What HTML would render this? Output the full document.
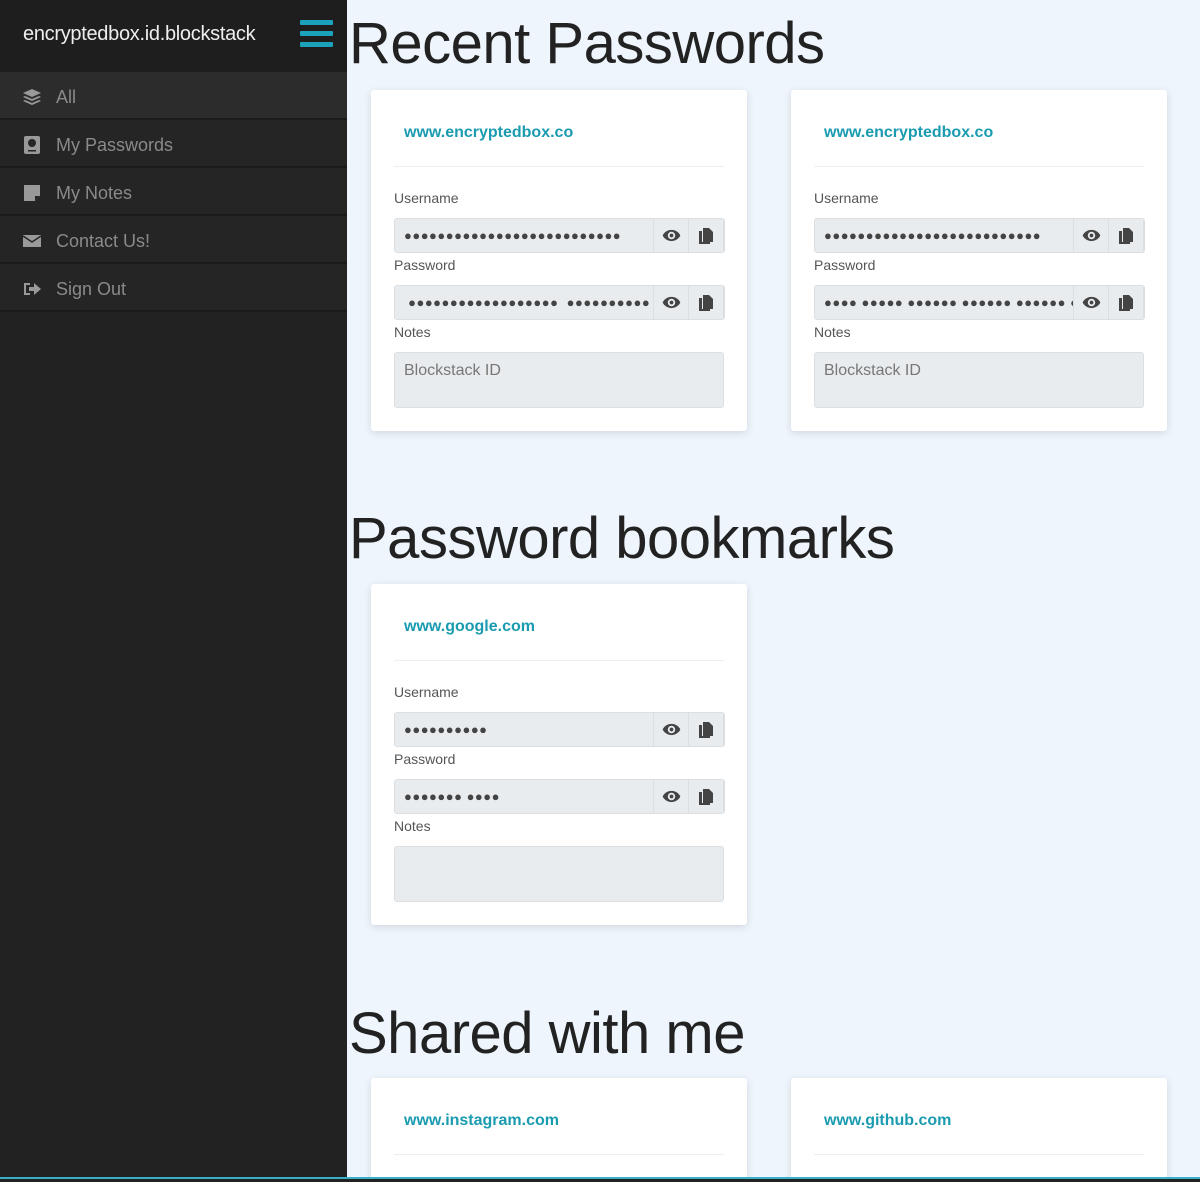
<!DOCTYPE html>
<html><head><meta charset="utf-8"><style>
*{box-sizing:border-box;margin:0;padding:0}
html{width:1200px;height:1182px;overflow:hidden}
body{width:1200px;height:1182px;overflow:hidden;background:#eef5fc;font-family:"Liberation Sans",sans-serif;position:relative}
.side{position:absolute;left:0;top:0;width:347px;height:1182px;background:#222}
.sh{height:72px;background:#1e1e1e;color:#eee;font-size:20px;padding:23px 0 0 23px;letter-spacing:-0.3px}
.burger{position:absolute;left:300px;top:20px;width:33px}
.burger i{display:block;height:5px;background:#1ba3bb;margin-bottom:6px;border-radius:1px}
.item{height:48px;border-bottom:2px solid #1b1b1b;background:#252525;color:#8a8a8a;font-size:18px;display:flex;align-items:center;padding-left:22px;padding-top:4px}
.item.a{background:#2c2c2c}
.item svg{width:20px;height:20px;margin-right:14px;fill:#999}
h1{position:absolute;left:349px;font-weight:300;font-size:58px;color:#222;letter-spacing:-0.5px;line-height:1}
.card{position:absolute;width:376px;height:341px;background:#fff;border-radius:3px;box-shadow:0 2px 8px rgba(0,0,0,.12)}
.card .t{position:absolute;left:33px;top:34px;color:#1a9bb0;font-weight:bold;font-size:16px}
.card hr{position:absolute;left:23px;right:23px;top:76px;border:0;border-top:1px solid #eee}
.lbl{position:absolute;left:23px;font-size:14px;color:#555}
.inp{position:absolute;left:23px;width:331px;height:35px;background:#e9ecef;border:1px solid #dcdfe2;border-radius:3px;color:#444;font-size:13px;letter-spacing:0.5px;line-height:33px;padding-left:9px;overflow:hidden;white-space:nowrap}
.b1,.b2{position:absolute;top:-1px;height:35px;width:36px;border:1px solid #dcdfe2;background:#e9ecef;display:flex;align-items:center;justify-content:center}
.b1{left:258px}.b2{left:293px}
.ta{position:absolute;left:23px;top:262px;width:330px;height:56px;background:#e9ecef;border:1px solid #dcdfe2;border-radius:3px;color:#777;font-size:16px;padding:9px 9px}
.bot{position:absolute;left:0;top:1177px;width:1200px;height:5px;background:#222;border-top:2px solid #3ab0c8}
</style></head><body>
<div class="side">
<div class="sh">encryptedbox.id.blockstack</div>
<div class="burger"><i></i><i></i><i></i></div>
<div class="item a"><svg viewBox="0 0 20 20"><path d="M10 2L1 6l9 4 9-4zM1 10l9 4 9-4-2-1-7 3-7-3zM1 14l9 4 9-4-2-1-7 3-7-3z"/></svg><span>All</span></div>
<div class="item"><svg viewBox="0 0 20 20"><rect x="2" y="1" width="16" height="18" rx="2"/><circle cx="10" cy="8" r="4" fill="#252525"/><rect x="6" y="15" width="8" height="1.5" fill="#252525"/></svg><span>My Passwords</span></div>
<div class="item"><svg viewBox="0 0 20 20"><path d="M2 2h16v11l-5 5H2z"/><path d="M13 18v-5h5" fill="#252525"/></svg><span>My Notes</span></div>
<div class="item"><svg viewBox="0 0 20 20"><path d="M1 4h18v12H1z"/><path d="M1 5l9 6 9-6" stroke="#252525" stroke-width="1.5" fill="none"/></svg><span>Contact Us!</span></div>
<div class="item"><svg viewBox="0 0 20 20"><path d="M2 4h6v2H4v8h4v2H2z"/><path d="M7 8h5V4l7 6-7 6v-4H7z"/></svg><span>Sign Out</span></div>
</div>

<h1 style="top:15px">Recent Passwords</h1>
<h1 style="top:510px">Password bookmarks</h1>
<h1 style="top:1005px">Shared with me</h1>

<svg width="0" height="0" style="position:absolute"><defs>
<symbol id="eye" viewBox="0 0 20 14"><path d="M10 1C5 1 1.5 4.5 0.5 7c1 2.5 4.5 6 9.5 6s8.5-3.5 9.5-6C18.5 4.5 15 1 10 1zm0 10a4 4 0 110-8 4 4 0 010 8zm0-6a2 2 0 100 4 2 2 0 000-4z" fill="#444"/></symbol>
<symbol id="cp" viewBox="0 0 14 16"><path d="M0 3h3v11h8v2H0z" fill="#444"/><path d="M4 0h6l4 4v10H4z" fill="#444"/></symbol>
</defs></svg>

<div class="card" style="left:371px;top:90px">
<div class="t">www.encryptedbox.co</div><hr>
<div class="lbl" style="top:100px">Username</div>
<div class="inp" style="top:128px">●●●●●●●●●●●●●●●●●●●●●●●●●●<span class="b1"><svg width="19" height="13"><use href="#eye"/></svg></span><span class="b2"><svg width="14" height="16"><use href="#cp"/></svg></span></div>
<div class="lbl" style="top:167px">Password</div>
<div class="inp" style="top:195px">&nbsp;●●●●●●●●●●●●●●●●●● &nbsp;●●●●●●●●●●<span class="b1"><svg width="19" height="13"><use href="#eye"/></svg></span><span class="b2"><svg width="14" height="16"><use href="#cp"/></svg></span></div>
<div class="lbl" style="top:234px">Notes</div>
<div class="ta">Blockstack ID</div>
</div>

<div class="card" style="left:791px;top:90px">
<div class="t">www.encryptedbox.co</div><hr>
<div class="lbl" style="top:100px">Username</div>
<div class="inp" style="top:128px">●●●●●●●●●●●●●●●●●●●●●●●●●●<span class="b1"><svg width="19" height="13"><use href="#eye"/></svg></span><span class="b2"><svg width="14" height="16"><use href="#cp"/></svg></span></div>
<div class="lbl" style="top:167px">Password</div>
<div class="inp" style="top:195px">●●●● ●●●●● ●●●●●● ●●●●●● ●●●●●● ●<span class="b1"><svg width="19" height="13"><use href="#eye"/></svg></span><span class="b2"><svg width="14" height="16"><use href="#cp"/></svg></span></div>
<div class="lbl" style="top:234px">Notes</div>
<div class="ta">Blockstack ID</div>
</div>

<div class="card" style="left:371px;top:584px">
<div class="t">www.google.com</div><hr>
<div class="lbl" style="top:100px">Username</div>
<div class="inp" style="top:128px">●●●●●●●●●●<span class="b1"><svg width="19" height="13"><use href="#eye"/></svg></span><span class="b2"><svg width="14" height="16"><use href="#cp"/></svg></span></div>
<div class="lbl" style="top:167px">Password</div>
<div class="inp" style="top:195px">●●●●●●● ●●●●<span class="b1"><svg width="19" height="13"><use href="#eye"/></svg></span><span class="b2"><svg width="14" height="16"><use href="#cp"/></svg></span></div>
<div class="lbl" style="top:234px">Notes</div>
<div class="ta"></div>
</div>

<div class="card" style="left:371px;top:1078px;height:104px">
<div class="t">www.instagram.com</div><hr>
</div>
<div class="card" style="left:791px;top:1078px;height:104px">
<div class="t">www.github.com</div><hr>
</div>
<div class="bot"></div>
</body></html>
